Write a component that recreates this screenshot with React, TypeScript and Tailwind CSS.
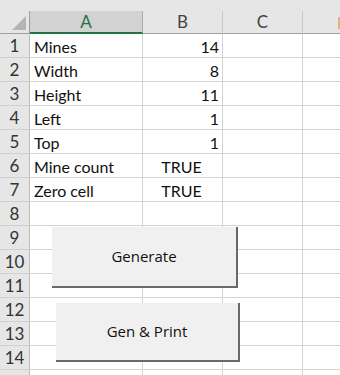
const rows: { n: number; a?: string; b?: string; align?: "right" | "center" }[] = [
  { n: 1, a: "Mines", b: "14", align: "right" },
  { n: 2, a: "Width", b: "8", align: "right" },
  { n: 3, a: "Height", b: "11", align: "right" },
  { n: 4, a: "Left", b: "1", align: "right" },
  { n: 5, a: "Top", b: "1", align: "right" },
  { n: 6, a: "Mine count", b: "TRUE", align: "center" },
  { n: 7, a: "Zero cell", b: "TRUE", align: "center" },
  { n: 8 },
  { n: 9 },
  { n: 10 },
  { n: 11 },
  { n: 12 },
  { n: 13 },
  { n: 14 },
];

function SheetButton({ label, className }: { label: string; className: string }) {
  return (
    <div
      className={`absolute flex items-center justify-center bg-[#f0f0f0] border-r-2 border-b-2 border-[#696969] text-[15px] text-[#111] ${className}`}
      style={{ fontFamily: '"Open Sans", "Noto Sans", sans-serif' }}
    >
      {label}
    </div>
  );
}

export default function App() {
  return (
    <div
      className="relative w-[340px] h-[375px] overflow-hidden bg-white"
      style={{ fontFamily: 'Lato, "Liberation Sans", sans-serif' }}
    >
      <div className="h-[11px] bg-[#e6e6e6]" />
      {/* column headers */}
      <div className="flex h-[23px] bg-[#e6e6e6] text-[17px] text-[#444]">
        <div className="relative w-[30px] shrink-0 border-r border-b border-[#9f9f9f]">
          <div className="absolute right-[3px] bottom-[3px] w-0 h-0 border-l-[14px] border-l-transparent border-b-[14px] border-b-[#b4b4b4]" />
        </div>
        <div className="w-[113px] shrink-0 flex items-center justify-center bg-[#d2d2d2] border-r border-[#ababab] border-b-2 border-b-[#217346] text-[#217346]">
          A
        </div>
        <div className="w-[80px] shrink-0 flex items-center justify-center border-r border-[#c8c8c8] border-b border-b-[#9f9f9f]">
          B
        </div>
        <div className="w-[80px] shrink-0 flex items-center justify-center border-r border-[#c8c8c8] border-b border-b-[#9f9f9f]">
          C
        </div>
        <div className="flex-1 border-b border-[#9f9f9f] relative">
          <div className="absolute right-0 top-[6px] w-[2px] h-[12px] bg-[#e3b27a]" />
        </div>
      </div>
      {/* rows */}
      {rows.map((r) => (
        <div key={r.n} className="flex h-[24px] text-[16px] text-[#111]">
          <div className="w-[30px] shrink-0 flex items-center justify-center pt-[1px] bg-[#e6e6e6] border-r border-r-[#bdbdbd] border-b border-b-[#d0d0d0] text-[#333] text-[17px]">
            {r.n}
          </div>
          <div className="w-[113px] shrink-0 flex items-center pt-[2px] pl-[4px] border-r border-b border-[#d4d4d4]">
            {r.a}
          </div>
          <div
            className={`w-[80px] shrink-0 flex items-center pt-[2px] border-r border-b border-[#d4d4d4] ${
              r.align === "center" ? "justify-center pr-[2px]" : "justify-end pr-[3px]"
            }`}
          >
            {r.b}
          </div>
          <div className="w-[80px] shrink-0 border-r border-b border-[#d4d4d4]" />
          <div className="flex-1 border-b border-[#d4d4d4]" />
        </div>
      ))}
      <div className="flex h-[24px]">
        <div className="w-[30px] shrink-0 bg-[#e6e6e6] border-r border-r-[#bdbdbd]" />
        <div className="w-[113px] shrink-0 border-r border-[#d4d4d4]" />
        <div className="w-[80px] shrink-0 border-r border-[#d4d4d4]" />
        <div className="w-[80px] shrink-0 border-r border-[#d4d4d4]" />
      </div>
      <SheetButton label="Generate" className="left-[52px] top-[227px] w-[186px] h-[61px]" />
      <SheetButton label="Gen & Print" className="left-[56px] top-[303px] w-[184px] h-[59px]" />
    </div>
  );
}
